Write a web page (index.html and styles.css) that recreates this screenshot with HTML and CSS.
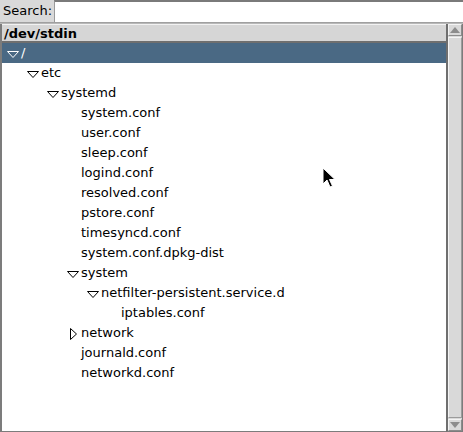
FILE: index.html
```html
<!DOCTYPE html>
<html lang="en">
<head>
  <meta charset="UTF-8" />
  <title>Tree browser</title>
  <link rel="stylesheet" href="styles.css">
</head>
<body>
  <div class="search">
    <label for="q">Search:</label>
    <input id="q" type="text" />
  </div>

  <div class="browser">
    <div class="tree">
      <div class="header">/dev/stdin</div>
      <ul class="rows">
        <li class="row selected d0"><span class="tog"><svg width="12" height="7" viewBox="0 0 12 7"><path d="M0.5 0.5 H11.5 L6 6.5 Z" fill="none" stroke="currentColor"/></svg></span>/</li>
        <li class="row d1"><span class="tog"><svg width="12" height="7" viewBox="0 0 12 7"><path d="M0.5 0.5 H11.5 L6 6.5 Z" fill="none" stroke="currentColor"/></svg></span>etc</li>
        <li class="row d2"><span class="tog"><svg width="12" height="7" viewBox="0 0 12 7"><path d="M0.5 0.5 H11.5 L6 6.5 Z" fill="none" stroke="currentColor"/></svg></span>systemd</li>
        <li class="row d3"><span class="tog"></span>system.conf</li>
        <li class="row d3"><span class="tog"></span>user.conf</li>
        <li class="row d3"><span class="tog"></span>sleep.conf</li>
        <li class="row d3"><span class="tog"></span>logind.conf</li>
        <li class="row d3"><span class="tog"></span>resolved.conf</li>
        <li class="row d3"><span class="tog"></span>pstore.conf</li>
        <li class="row d3"><span class="tog"></span>timesyncd.conf</li>
        <li class="row d3"><span class="tog"></span>system.conf.dpkg-dist</li>
        <li class="row d3"><span class="tog"><svg width="12" height="7" viewBox="0 0 12 7"><path d="M0.5 0.5 H11.5 L6 6.5 Z" fill="none" stroke="currentColor"/></svg></span>system</li>
        <li class="row d4"><span class="tog"><svg width="12" height="7" viewBox="0 0 12 7"><path d="M0.5 0.5 H11.5 L6 6.5 Z" fill="none" stroke="currentColor"/></svg></span>netfilter-persistent.service.d</li>
        <li class="row d5"><span class="tog"></span>iptables.conf</li>
        <li class="row d3"><span class="tog"><svg width="7" height="12" viewBox="0 0 7 12"><path d="M0.5 0.5 V11.5 L6.5 6 Z" fill="none" stroke="currentColor"/></svg></span>network</li>
        <li class="row d3"><span class="tog"></span>journald.conf</li>
        <li class="row d3"><span class="tog"></span>networkd.conf</li>
      </ul>
    </div>
    <div class="scrollbar">
      <div class="arrow up"><svg width="10" height="6" viewBox="0 0 10 6"><path d="M5 0 L10 6 H0 Z" fill="#8c8c8c"/></svg></div>
      <div class="trough"></div>
      <div class="arrow down"><svg width="10" height="6" viewBox="0 0 10 6"><path d="M0 0 H10 L5 6 Z" fill="#8c8c8c"/></svg></div>
    </div>
  </div>

  <svg class="cursor" width="14" height="22" viewBox="0 0 14 22">
    <path d="M1 1 V17 L5 13 L8 20 L10.5 19 L7.5 12.5 H13 Z" fill="#000" stroke="#fff" stroke-width="1"/>
  </svg>
</body>
</html>
```

FILE: styles.css
```css
* {
  box-sizing: border-box;
  margin: 0;
  padding: 0;
}

html, body {
  height: 100%;
  overflow: hidden;
  background: #fff;
  font-family: 'DejaVu Sans', sans-serif;
  font-size: 13px;
  color: #000;
}

.search {
  display: flex;
  height: 23px;
  background: #d9d9d9;
  border-bottom: 1px solid #a0a0a0;
}

.search label {
  padding: 0 3px 0 3px;
  line-height: 22px;
  width: 54px;
  font-size: 13px;
}

.search input {
  flex: 1;
  height: 22px;
  border: none;
  border-top: 2px solid #7a7a7a;
  border-left: 1px solid #9a9a9a;
  background: #fff;
  outline: none;
}

.browser {
  display: flex;
  height: 409px;
  border-top: 1px solid #b8b8b8;
}

.tree {
  flex: 1;
  border-left: 2px solid #7c7c7c;
  border-bottom: 1px solid #7c7c7c;
}

.header {
  height: 19px;
  line-height: 17px;
  padding-left: 2px;
  font-weight: bold;
  font-size: 13px;
  background: #d6d6d6;
  border-top: 1px solid #f2f2f2;
  border-bottom: 2px solid #6f6f6f;
}

.rows {
  list-style: none;
}

.row {
  display: flex;
  align-items: center;
  height: 20px;
  white-space: nowrap;
  font-size: 13px;
  padding-bottom: 1px;
}

.row.selected {
  background: #4a6984;
  color: #fff;
}

.tog {
  width: 16px;
  display: flex;
  align-items: center;
  justify-content: center;
  flex-shrink: 0;
  padding-top: 3px;
}

.d0 { padding-left: 3px; }
.d1 { padding-left: 23px; }
.d2 { padding-left: 43px; }
.d3 { padding-left: 63px; }
.d4 { padding-left: 83px; }
.d5 { padding-left: 103px; }

.scrollbar {
  width: 17px;
  display: flex;
  flex-direction: column;
  background: #d9d9d9;
  border-left: 2px solid #6f6f6f;
  border-right: 1px solid #7c7c7c;
  border-bottom: 1px solid #7c7c7c;
}

.arrow {
  height: 12px;
  display: flex;
  align-items: center;
  justify-content: center;
  border: 1px solid #f4f4f4;
  border-right-color: #8c8c8c;
  border-bottom-color: #8c8c8c;
}

.trough {
  flex: 1;
  border: 1px solid #f4f4f4;
  border-right-color: #9c9c9c;
  border-bottom-color: #9c9c9c;
  margin: 1px 0;
}

.cursor {
  position: absolute;
  left: 322px;
  top: 167px;
}
```
